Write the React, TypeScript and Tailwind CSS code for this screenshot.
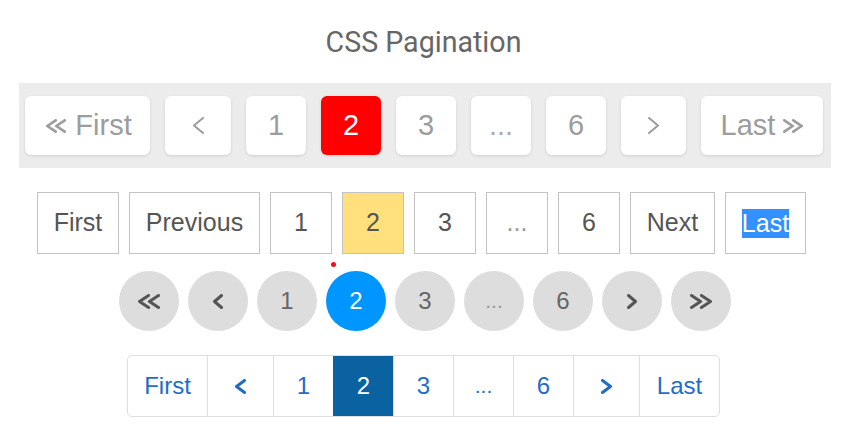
import React from "react";

function Chev({ dir, double, w, h, sw, color }: { dir: "l" | "r"; double?: boolean; w: number; h: number; sw: number; color: string }) {
  const pts = (x0: number, cw: number) =>
    dir === "l"
      ? `${x0 + cw - sw / 2},${sw / 2} ${x0 + sw / 2},${h / 2} ${x0 + cw - sw / 2},${h - sw / 2}`
      : `${x0 + sw / 2},${sw / 2} ${x0 + cw - sw / 2},${h / 2} ${x0 + sw / 2},${h - sw / 2}`;
  const cw = double ? w * 0.55 : w;
  return (
    <svg width={w} height={h} viewBox={`0 0 ${w} ${h}`} fill="none" stroke={color} strokeWidth={sw} strokeLinecap="round" strokeLinejoin="round">
      <polyline points={pts(0, cw)} />
      {double && <polyline points={pts(w - cw, cw)} />}
    </svg>
  );
}

const font = { fontFamily: '"Liberation Sans", Arial, sans-serif' };

export default function App() {
  const b1 = "h-[59px] flex items-center justify-center rounded-[6px] bg-white shadow-[0_1px_3px_rgba(0,0,0,0.12)] text-[29px] text-[#9c9c9c]";
  const b2 = "h-[62px] flex items-center justify-center border border-[#c3c3c3] bg-white text-[25px] text-[#555]";
  const c3 = "w-[60px] h-[60px] rounded-full flex items-center justify-center bg-[#dddddd] text-[24px] text-[#666]";
  const b4 = "h-full flex items-center justify-center border-l border-[#dedede] text-[24px] text-[#1f6dc6]";
  return (
    <div className="w-[847px] h-[439px] bg-white flex flex-col relative" style={font}>
      <div className="h-[83px] flex justify-center pt-[26px]">
        <h1 className="text-[28.6px] leading-[32px] text-[#666666]" style={{ fontFamily: 'Roboto, "Open Sans", sans-serif' }}>
          CSS Pagination
        </h1>
      </div>

      <div className="ml-[19px] w-[812px] h-[85px] bg-[#ececec] flex items-center gap-[15px] pl-[6px]">
        <div className={`${b1} w-[125px] gap-[9px] pl-[3px]`}><Chev dir="l" double w={20} h={14} sw={2.6} color="#9c9c9c" /><span>First</span></div>
        <div className={`${b1} w-[66px]`}><Chev dir="l" w={11} h={17} sw={2} color="#9c9c9c" /></div>
        <div className={`${b1} w-[60px]`}>1</div>
        <div className={`${b1} w-[60px] !bg-[#ff0000] !text-white`}>2</div>
        <div className={`${b1} w-[60px]`}>3</div>
        <div className={`${b1} w-[60px] !text-[#aaa]`}>...</div>
        <div className={`${b1} w-[60px]`}>6</div>
        <div className={`${b1} w-[65px]`}><Chev dir="r" w={11} h={17} sw={2} color="#9c9c9c" /></div>
        <div className={`${b1} w-[122px] gap-[8px]`}><span>Last</span><Chev dir="r" double w={20} h={14} sw={2.6} color="#9c9c9c" /></div>
      </div>

      <div className="mt-[24px] h-[62px] flex justify-center gap-[10px] pr-[4px]">
        <div className={`${b2} w-[82px]`}>First</div>
        <div className={`${b2} w-[131px]`}>Previous</div>
        <div className={`${b2} w-[62px]`}>1</div>
        <div className={`${b2} w-[62px] !bg-[#ffe07c]`}>2</div>
        <div className={`${b2} w-[62px]`}>3</div>
        <div className={`${b2} w-[62px] !text-[#999]`}>...</div>
        <div className={`${b2} w-[62px]`}>6</div>
        <div className={`${b2} w-[85px]`}>Next</div>
        <div className={`${b2} w-[81px]`}><span className="bg-[#3391ff] text-white leading-[29px]">Last</span></div>
      </div>

      <div className="absolute left-[331px] top-[262px] w-[5px] h-[5px] rounded-full bg-[#e8141c]" />

      <div className="mt-[17px] h-[60px] flex justify-center gap-[9px] pl-[3px]">
        <div className={c3}><Chev dir="l" double w={22} h={15} sw={3} color="#555" /></div>
        <div className={c3}><Chev dir="l" w={10} h={15} sw={3} color="#555" /></div>
        <div className={c3}>1</div>
        <div className={`${c3} !bg-[#0096ff] !text-white`}>2</div>
        <div className={c3}>3</div>
        <div className={`${c3} !text-[21px] !text-[#999]`}>...</div>
        <div className={c3}>6</div>
        <div className={c3}><Chev dir="r" w={10} h={15} sw={3} color="#555" /></div>
        <div className={c3}><Chev dir="r" double w={22} h={15} sw={3} color="#555" /></div>
      </div>

      <div className="mt-[24px] flex justify-center">
        <div className="h-[62px] flex border border-[#dedede] rounded-[5px] overflow-hidden bg-white">
          <div className={`${b4} w-[79px] !border-l-0`}>First</div>
          <div className={`${b4} w-[66px]`}><Chev dir="l" w={11} h={15} sw={3} color="#1f6dc6" /></div>
          <div className={`${b4} w-[60px]`}>1</div>
          <div className={`${b4} w-[60px] !bg-[#0b62a1] !text-white !border-[#0b62a1]`}>2</div>
          <div className={`${b4} w-[60px]`}>3</div>
          <div className={`${b4} w-[60px] !text-[21px]`}>...</div>
          <div className={`${b4} w-[60px]`}>6</div>
          <div className={`${b4} w-[66px]`}><Chev dir="r" w={11} h={15} sw={3} color="#1f6dc6" /></div>
          <div className={`${b4} w-[80px]`}>Last</div>
        </div>
      </div>
    </div>
  );
}
